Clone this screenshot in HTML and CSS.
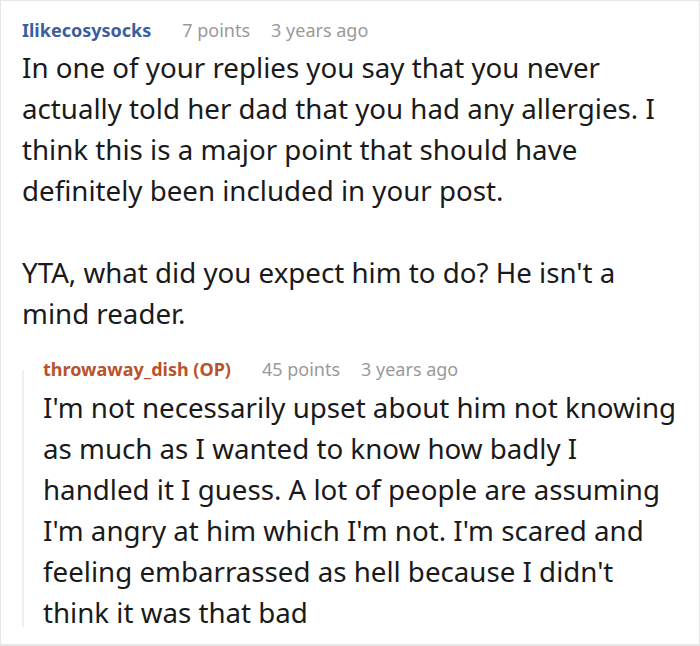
FILE: index.html
```html
<!DOCTYPE html>
<html>
<head>
<meta charset="utf-8">
<link rel="stylesheet" href="styles.css">
</head>
<body>
<div class="frame">
  <div class="comment">
    <div class="meta">
      <span class="author">Ilikecosysocks</span>
      <span class="points">7 points</span>
      <span class="time">3 years ago</span>
    </div>
    <div class="text">
      <p>In one of your replies you say that you never<br>actually told her dad that you had any allergies. I<br>think this is a major point that should have<br>definitely been included in your post.</p>
      <p>YTA, what did you expect him to do? He isn't a<br>mind reader.</p>
    </div>
    <div class="reply">
      <div class="meta">
        <span class="author op">throwaway_dish (OP)</span>
        <span class="points">45 points</span>
        <span class="time">3 years ago</span>
      </div>
      <div class="text">
        <p>I'm not necessarily upset about him not knowing<br>as much as I wanted to know how badly I<br>handled it I guess. A lot of people are assuming<br>I'm angry at him which I'm not. I'm scared and<br>feeling embarrassed as hell because I didn't<br>think it was that bad</p>
      </div>
    </div>
  </div>
</div>
</body>
</html>
```

FILE: styles.css
```css
html, body {
  margin: 0;
  padding: 0;
  background: #fff;
}
body {
  font-family: "Noto Sans", "Open Sans", sans-serif;
  color: #1a1a1a;
}
.frame {
  width: 700px;
  height: 646px;
  box-sizing: border-box;
  border: 1px solid #e6e6e6;
  border-bottom-width: 2px;
  overflow: hidden;
}
.comment {
  padding: 17px 0 0 21px;
}
.meta {
  display: flex;
  font-size: 18px;
  line-height: 24px;
  white-space: nowrap;
}
.author {
  font-weight: bold;
  color: #3b5e9c;
  margin-right: 31px;
}
.author.op {
  color: #b8532b;
}
.points {
  color: #999;
  margin-right: 21px;
}
.time {
  color: #999;
}
.text {
  font-size: 27.7px;
  line-height: 41px;
  margin-top: 5px;
  white-space: nowrap;
}
.text p {
  margin: 0 0 41px 0;
}
.text p:last-child {
  margin-bottom: 0;
}
.reply {
  margin-top: 18px;
  padding-top: 5px;
  padding-left: 21px;
  position: relative;
}
.reply::before {
  content: "";
  position: absolute;
  left: 0;
  top: 18px;
  bottom: 6px;
  width: 2px;
  background: #efefef;
}
.reply .text {
  margin-top: 6px;
}
```
